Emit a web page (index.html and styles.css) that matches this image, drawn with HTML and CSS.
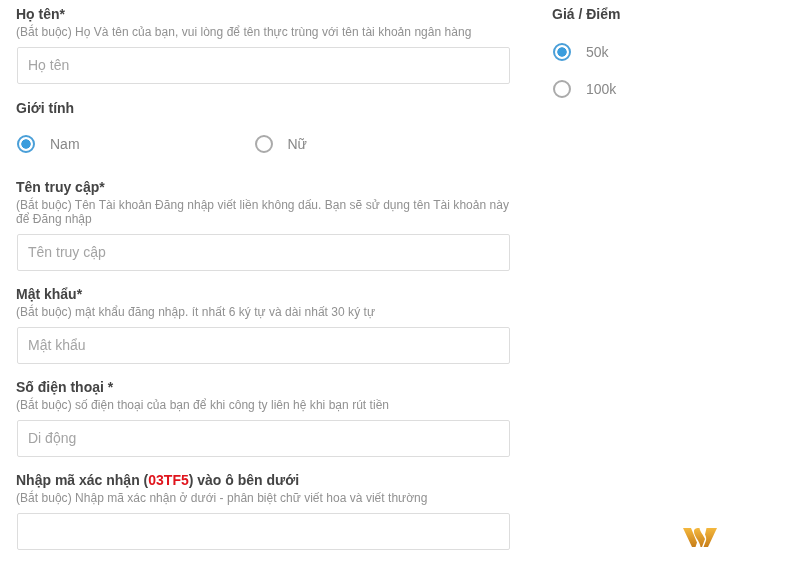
FILE: index.html
```html
<!DOCTYPE html>
<html lang="vi">
<head>
<meta charset="utf-8">
<title>Đăng ký</title>
<link rel="stylesheet" href="styles.css">
</head>
<body>
<div class="page">
  <form class="main">
    <div class="field">
      <label class="label">Họ tên*</label>
      <p class="hint">(Bắt buộc) Họ Và tên của bạn, vui lòng để tên thực trùng với tên tài khoản ngân hàng</p>
      <input class="input" type="text" placeholder="Họ tên">
    </div>
    <div class="field gender">
      <label class="label">Giới tính</label>
      <div class="radio-row">
        <div class="radio-item gender-item"><span class="radio checked"></span><span class="radio-text">Nam</span></div>
        <div class="radio-item"><span class="radio"></span><span class="radio-text">Nữ</span></div>
      </div>
    </div>
    <div class="field">
      <label class="label">Tên truy cập*</label>
      <p class="hint">(Bắt buộc) Tên Tài khoản Đăng nhập viết liền không dấu. Bạn sẽ sử dụng tên Tài khoản này để Đăng nhập</p>
      <input class="input" type="text" placeholder="Tên truy cập">
    </div>
    <div class="field">
      <label class="label">Mật khẩu*</label>
      <p class="hint">(Bắt buộc) mật khẩu đăng nhập. ít nhất 6 ký tự và dài nhất 30 ký tự</p>
      <input class="input" type="text" placeholder="Mật khẩu">
    </div>
    <div class="field">
      <label class="label">Số điện thoại *</label>
      <p class="hint">(Bắt buộc) số điện thoại của bạn để khi công ty liên hệ khi bạn rút tiền</p>
      <input class="input" type="text" placeholder="Di động">
    </div>
    <div class="field">
      <label class="label">Nhập mã xác nhận (<span class="code">03TF5</span>) vào ô bên dưới</label>
      <p class="hint">(Bắt buộc) Nhập mã xác nhận ở dưới - phân biệt chữ viết hoa và viết thường</p>
      <input class="input" type="text">
    </div>
  </form>
  <aside class="side">
    <label class="label side-label">Giá / Điểm</label>
    <div class="radio-col">
      <div class="radio-item"><span class="radio checked"></span><span class="radio-text">50k</span></div>
      <div class="radio-item"><span class="radio"></span><span class="radio-text">100k</span></div>
    </div>
    <svg class="logo" width="34" height="19" viewBox="0 0 34 19" aria-hidden="true">
      <defs>
        <linearGradient id="gold" x1="0" y1="0" x2="0" y2="1">
          <stop offset="0" stop-color="#f4b83e"/>
          <stop offset="1" stop-color="#c77d18"/>
        </linearGradient>
      </defs>
      <path fill="url(#gold)" d="M0 0H8L14 14.500 12.500 19H9ZM11 3C11 .5 14 0 16.500 0 17 4 20.500 7 22 11L19 19H17.500C17 13 10.500 8 11 3ZM23.500 0H34L25 19H20.500L23 12.500C23.500 10.500 23 8.500 22 6.500Z"/>
    </svg>
  </aside>
</div>
</body>
</html>
```
FILE: styles.css
```css
* { box-sizing: border-box; }
html, body { margin: 0; padding: 0; background: #fff; }
body {
  width: 800px;
  height: 564px;
  overflow: hidden;
  font-family: "Liberation Sans", Arial, sans-serif;
}
.page {
  display: flex;
  padding: 6px 0 0 17px;
  gap: 42px;
  filter: blur(0.35px);
}
.main { width: 493px; flex: none; }
.field { margin-bottom: 15px; }
.field:first-child { margin-bottom: 16px; }
.gender { margin-bottom: 25px; }
.label {
  display: block;
  margin-left: -1px;
  font-size: 14px;
  line-height: 16px;
  font-weight: 700;
  color: #444;
}
.side-label { margin-left: 0; }
.code { color: #e0141c; }
.hint {
  margin: 3px 0 8px -1px;
  font-size: 12px;
  line-height: 14px;
  letter-spacing: 0.03px;
  color: #919191;
}
.input {
  display: block;
  width: 100%;
  height: 37px;
  padding: 0 10px 2px;
  border: 1px solid #ddd;
  border-radius: 2px;
  background: #fff;
  font: 14px "Liberation Sans", Arial, sans-serif;
  color: #555;
}
.input::placeholder { color: #a4a4a4; opacity: 1; }
.radio-row { display: flex; margin-top: 18px; }
.gender-item { width: 237.5px; }
.radio-item { display: flex; align-items: center; gap: 15px; height: 20px; }
.radio {
  flex: none;
  width: 18px;
  height: 18px;
  border: 2px solid #aaa;
  border-radius: 50%;
  background: #fff;
}
.radio.checked {
  border-color: #4a9fd8;
  background: radial-gradient(circle, #3b9ddd 0 4.4px, #fff 5px);
}
.radio-text { font-size: 14px; color: #888; }
.side { position: relative; flex: 1; }
.radio-col { display: flex; flex-direction: column; gap: 17px; margin: 20px 0 0 1px; }
.logo { position: absolute; left: 131px; top: 522px; }
```
